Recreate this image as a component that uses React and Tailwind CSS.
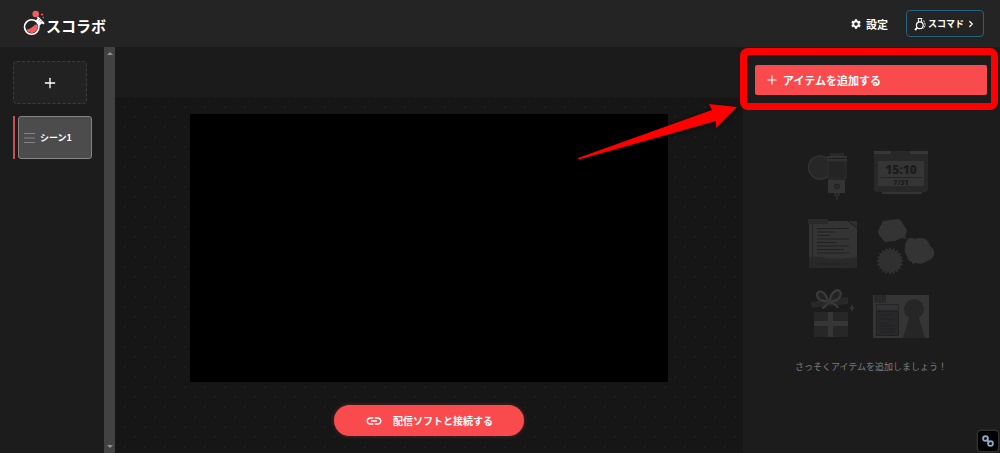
import { ChevronRight, Plus } from "lucide-react";
import { MdLink, MdSettings } from "react-icons/md";

const BURST_POINTS = Array.from({ length: 40 }, (_, i) => {
  const r = i % 2 === 0 ? 14 : 11;
  const a = (i * Math.PI) / 20;
  return `${(19 + r * Math.cos(a)).toFixed(1)},${(52 + r * Math.sin(a)).toFixed(1)}`;
}).join(" ");

const FlaskLogo = () => (
  <svg viewBox="0 0 22 27" className="w-[22px] h-[27px] shrink-0" aria-hidden="true">
    <path d="M12 11 15.500 8 20 12.500 16 16Z" fill="#fff" />
    <path d="M15 7.600 20.400 13.200" stroke="#fff" strokeWidth="2" strokeLinecap="round" />
    <path d="M17.200 9 15.800 10.600M18.800 10.600 17.400 12.200" stroke="#242424" strokeWidth=".6" />
    <circle cx="8.700" cy="17" r="7.200" fill="#242424" stroke="#fff" strokeWidth="1.600" />
    <path d="M3.200 19.400C6 19.600 8 18.400 9.600 16.800c1.400-1.400 2.900-2.400 4.600-2.600A6 6 0 0 1 3.200 19.400Z" fill="#f45b60" />
    <circle cx="12.700" cy="4" r="3.300" fill="#f45b60" />
    <circle cx="19" cy="4.500" r="1.100" fill="#f45b60" />
    <circle cx="20.300" cy="7.600" r=".8" fill="#f45b60" />
  </svg>
);

const CommandIcon = () => (
  <svg viewBox="0 0 12 14" className="w-3 h-3.5 shrink-0" fill="none" stroke="#fff" aria-hidden="true">
    <circle cx="5.800" cy="8.200" r="3.400" strokeWidth="1.200" />
    <path d="M4.400 5V2.200M7.400 5V2.200M3.600 1.600h4.700" strokeWidth="1" />
    <path d="M3.300 10.700 1 13" strokeWidth="1.800" />
    <path d="M9.300 3.400c2.200 2 2.400 6 .2 8.200" strokeWidth=".9" strokeDasharray="2 .8" />
  </svg>
);

const CameraArt = () => (
  <svg viewBox="0 0 72 70" className="w-full" aria-hidden="true">
    <circle cx="21" cy="28.500" r="11.500" fill="#272727" stroke="#323232" strokeWidth="1.500" />
    <path d="M31 14h14v4H31z" fill="#292929" />
    <path d="M28 17h20v2H28zM28 20h20v2H28z" fill="#343434" />
    <path d="M29 22h18v18H29z" fill="#242424" stroke="#2f2f2f" />
    <rect x="29" y="41" width="17" height="13" rx="1" fill="#343434" />
    <circle cx="38" cy="47.500" r="2.500" fill="#2c2c2c" stroke="#1f1f1f" />
    <path d="M35 54h6v3h-2v3l-1 2-1-2v-3h-2z" fill="#2a2a2a" />
  </svg>
);

const ClockArt = () => (
  <svg viewBox="0 0 72 70" className="w-full" aria-hidden="true">
    <path d="M3 12h54v38q0 3-3 3H6q-3 0-3-3z" fill="#282828" />
    <path d="M3 12h17v3H3zM39 12h18v3H39z" fill="#373737" />
    <path d="M11 53h40v2H11z" fill="#343434" />
    <path d="M7 22h46v25H7z" fill="#353535" />
    <path d="M9 38.500h42" stroke="#242424" />
    <g fill="#1c1c1c" textAnchor="middle" className="font-['Open_Sans',sans-serif] font-extrabold">
      <text x="30" y="35" fontSize="12">15:10</text>
      <text x="30" y="46" fontSize="7">7/31</text>
    </g>
  </svg>
);

const NoteArt = () => (
  <svg viewBox="0 0 72 70" className="w-full" aria-hidden="true">
    <path d="M10 12h48v47H10z" fill="#343434" />
    <path d="M9 10h20v5H9z" fill="#2a2a2a" />
    <path d="M13.500 15v34" stroke="#232323" />
    <path d="M49 12h9v7z" fill="#303030" />
    <path d="M49 12 58 19" stroke="#1e1e1e" />
    <path
      d="M18 19.500h32M18 23h18M18 26.500h13M18 30h32M18 33.500h20M18 37h32M18 40.500h27M18 44h32"
      stroke="#202020"
    />
    <path d="M10 48q9-1 17 1 14 2 31-1v11H10z" fill="#292929" />
    <path d="M18 55h24M45 55h4" stroke="#212121" />
  </svg>
);

const BubblesArt = () => (
  <svg viewBox="0 0 72 70" className="w-full" fill="#343434" aria-hidden="true">
    <path d="M12 12 27 10Q29 10 30 12L36 21 34 28 36 30 31 29 24 32 14 33 8 26 7 22Z" />
    <polygon points={BURST_POINTS} fill="#303030" />
    <path d="M37 30q3-2 7 0 5-2 10 0 4 2 5 7 5 3 4 9-2 5-7 6-5 4-11 2-2 0-3 2l-1-3q-5-1-5-6-3-3-2-8 0-6 3-9z" />
  </svg>
);

const GiftArt = () => (
  <svg viewBox="0 0 72 70" className="w-full" aria-hidden="true">
    <path d="m12 23 37-5v7l-36 4z" fill="#282828" />
    <path d="M15 33h34v25H15z" fill="#272727" />
    <path d="M15 42h34v5H15zM29 33h5v25h-5z" fill="#363636" />
    <g fill="#242424" stroke="#3b3b3b" strokeWidth="2.200" strokeLinejoin="round">
      <path d="M29 22C28 16 23 11 19.500 13S18 23 29 22Z" />
      <path d="M31 22C31 15 37 9 40.500 12S40 23 31 22Z" />
      <path d="M28 24q-2 5-5 5M32 24q5 1 7 5" fill="none" />
    </g>
    <circle cx="30" cy="23" r="2.500" fill="#343434" />
    <path d="m53 25 1 3 2 1-2 1-1 3-1-3-2-1 2-1z" fill="#363636" />
  </svg>
);

const ProfileArt = () => (
  <svg viewBox="0 0 72 70" className="w-full" aria-hidden="true">
    <path d="M2 16h56v43H2z" fill="#353535" />
    <path d="M3 16h12v8H3z" fill="#292929" />
    <path d="M5.500 25.500h22v6h-22z" fill="#333333" stroke="#262626" />
    <path d="M5.500 32.500h22v24h-22z" fill="#28282b" stroke="#212121" />
    <path d="M9 36h11M9 40h15M9 44h9M9 47h15M9 50h15M9 53h15" stroke="#202024" />
    <circle cx="43" cy="30" r="10" fill="#262626" />
    <path d="M39 36h8l7 23H32z" fill="#262626" />
  </svg>
);

// Hand-drawn style callout over the add button
const Callout = () => (
  <>
    <div className="absolute -left-[15px] -right-[11px] -top-[17px] -bottom-[15px] border-7 border-[#ff0000] rounded-lg pointer-events-none" />
    <svg
      viewBox="0 0 160 57"
      className="absolute right-full top-[38px] mr-[18px] w-[160px] h-[57px] max-w-none pointer-events-none drop-shadow-[1px_1px_2px_rgba(0,0,0,0.6)]"
      aria-hidden="true"
    >
      <path d="M1 55 135 7 132 1 160 4 139 25 139 18 2 56.500Z" fill="#ff0000" />
    </svg>
  </>
);

const Header = () => (
  <header className="h-[47px] shrink-0 bg-[#242424] flex items-center justify-between pl-[23px] pr-4">
    <a href="#" className="flex items-center gap-px">
      <FlaskLogo />
      <span className="text-[15px] leading-5 font-bold pt-1">スコラボ</span>
    </a>
    <div className="flex items-center gap-[18px]">
      <button type="button" className="flex items-center gap-1 text-[11px] leading-4 font-bold">
        <MdSettings className="size-3" /> 設定
      </button>
      <button
        type="button"
        className="h-[27px] w-[78px] flex items-center justify-center gap-0.5 border border-[#28607f] rounded text-[9px] leading-4 font-bold"
      >
        <CommandIcon />
        <span>スコマド</span>
        <ChevronRight className="size-2.5" strokeWidth={3} />
      </button>
    </div>
  </header>
);

const Sidebar = () => (
  <aside className="w-[115px] shrink-0 flex bg-[#1c1c1c]">
    <div className="flex-1 pl-[13px] pt-[14px]">
      <button
        type="button"
        aria-label="シーンを追加"
        className="w-[74px] h-[43px] flex items-center justify-center bg-[#222222] border border-dashed border-[#3c3c3c] rounded"
      >
        <Plus className="size-4" strokeWidth={2} />
      </button>
      <div className="mt-3 flex gap-[3px]">
        <span className="w-0.5 bg-[#c94d50]" />
        <button
          type="button"
          className="w-[74px] h-[43px] flex items-center gap-1 pl-[5px] bg-[#4c4c4c] border border-[#858585] rounded-[3px] text-[9px] leading-4 font-bold"
        >
          <svg viewBox="0 0 12 12" className="size-3 shrink-0" stroke="#858585" aria-hidden="true">
            <path d="M0 1.500h11M0 6h11M0 10.500h11" />
          </svg>
          シーン1
        </button>
      </div>
    </div>
    <div className="w-[11px] bg-[#424242] flex flex-col justify-between items-center py-1">
      <svg viewBox="0 0 6 4" className="w-1.5 h-1" aria-hidden="true">
        <path d="M0 4 3 1 6 4Z" fill="#929292" />
      </svg>
      <svg viewBox="0 0 6 4" className="w-1.5 h-1" aria-hidden="true">
        <path d="M0 0 3 3 6 0Z" fill="#929292" />
      </svg>
    </div>
  </aside>
);

const Stage = () => (
  <main className="flex-1 min-w-0 flex flex-col bg-[#1b1b1b] pt-[50px]">
    <div className="flex-1 flex flex-col items-center pt-[17px] pb-4 bg-[#161616] bg-[radial-gradient(circle,#1d1d1d_1px,transparent_1px),radial-gradient(circle,#1d1d1d_1px,transparent_1px)] bg-size-[20px_20px] bg-position-[0_0,10px_10px]">
      <div className="w-[76%] aspect-video bg-black" />
      <button
        type="button"
        className="mt-[23px] h-[31px] w-[190px] flex items-center justify-center gap-2.5 rounded-full bg-[#f94b4e] text-[10px] leading-4 font-bold shadow-[0_0_4px_rgba(250,75,78,0.35)]"
      >
        <MdLink className="size-[18px]" />
        配信ソフトと接続する
      </button>
    </div>
  </main>
);

const ItemPanel = () => (
  <aside className="w-[257px] shrink-0 bg-[#1c1c1c] pl-3 pr-[13px] pt-[18px] flex flex-col">
    <div className="relative">
      <button
        type="button"
        className="w-full h-[30px] flex items-center gap-1 pl-2.5 rounded-[2px] bg-[#f94b4e] text-[11px] leading-4 font-bold"
      >
        <Plus className="size-3.5" strokeWidth={2} />
        アイテムを追加する
      </button>
      <Callout />
    </div>
    <div className="mt-11 mx-auto w-36 grid grid-cols-2">
      <CameraArt />
      <ClockArt />
      <NoteArt />
      <BubblesArt />
      <GiftArt />
      <ProfileArt />
    </div>
    <p className="mt-2.5 text-center text-[9px] leading-4 text-[#7c7c7c]">
      さっそくアイテムを追加しましょう！
    </p>
    <button
      type="button"
      aria-label="リンク"
      className="mt-auto mb-0.5 -mr-[11px] self-end size-5 flex items-center justify-center rounded-[3px] bg-black shadow-[0_0_2px_1px_#3a3a3a]"
    >
      <svg viewBox="0 0 12 12" className="size-3" fill="none" stroke="#8fabc8" strokeWidth="1.800" aria-hidden="true">
        <circle cx="3.500" cy="3.500" r="2.400" />
        <circle cx="8.500" cy="8.500" r="2.400" />
        <path d="m4.500 4.500 3 3" />
      </svg>
    </button>
  </aside>
);

const App = () => (
  <div className="min-h-screen flex flex-col bg-[#1c1c1c] text-white font-['Noto_Sans_CJK_JP',sans-serif]">
    <Header />
    <div className="flex-1 flex">
      <Sidebar />
      <Stage />
      <ItemPanel />
    </div>
  </div>
);

export default App;
